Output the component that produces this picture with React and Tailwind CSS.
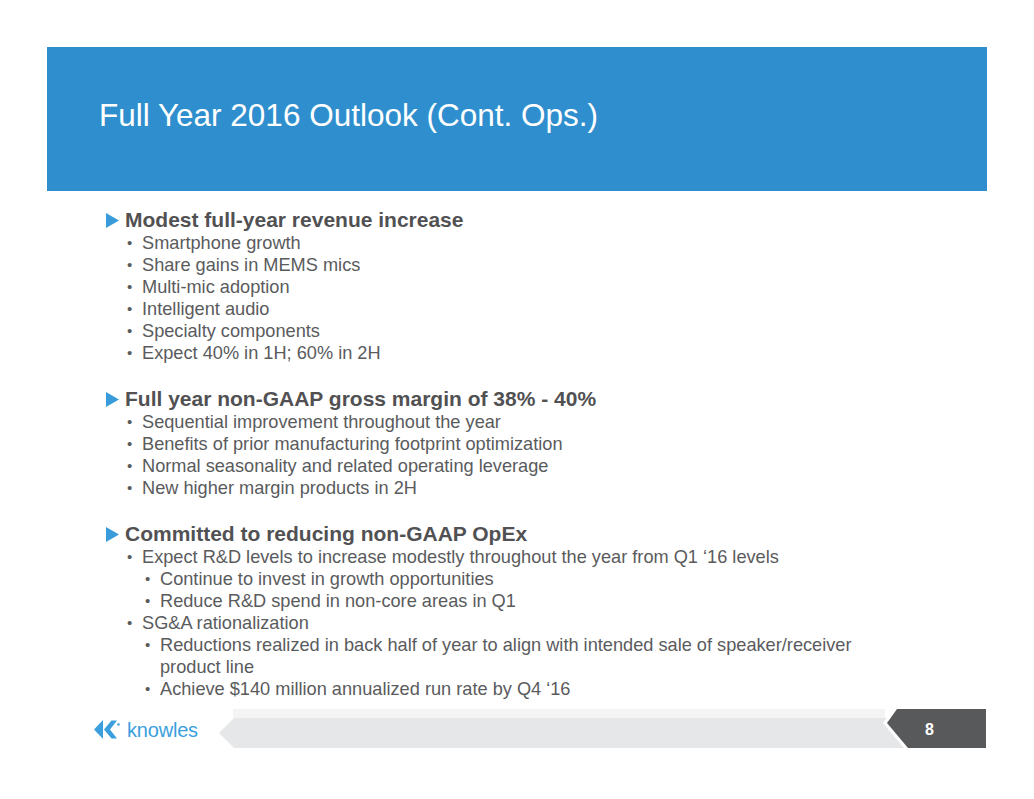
import React from "react";

const Item = ({ children, level = 1 }) => (
  <div className={`flex items-start leading-[22px] text-[18.2px] ${level === 1 ? "pl-[2px]" : "pl-[20px]"}`}>
    <span className="w-[15px] shrink-0 text-[15px] leading-[22px]">•</span>
    <span>{children}</span>
  </div>
);

const Heading = ({ children, className = "" }) => (
  <div className={`flex items-center h-[24px] ${className}`}>
    <svg width="14" height="15" viewBox="0 0 14 15" className="ml-[-19px] mr-[5px] shrink-0">
      <polygon points="0,0 13,7.5 0,15" fill="#3a9bdb" />
    </svg>
    <span className="font-bold text-[21px] leading-[24px] text-[#515153]">{children}</span>
  </div>
);

export default function App() {
  return (
    <div className="w-[1034px] h-[799px] bg-white font-['Liberation_Sans',Arial,sans-serif] text-[#5a5b5d] overflow-hidden">
      <div className="pt-[47px] px-[47px]">
        <div className="h-[144px] bg-[#2f8fce] pl-[52px] pt-[50px]">
          <h1 className="text-white text-[31.5px] leading-[36px] font-normal">Full Year 2016 Outlook (Cont. Ops.)</h1>
        </div>
      </div>

      <div className="pl-[125px] pt-[17px]">
        <Heading>Modest full-year revenue increase</Heading>
        <Item>Smartphone growth</Item>
        <Item>Share gains in MEMS mics</Item>
        <Item>Multi-mic adoption</Item>
        <Item>Intelligent audio</Item>
        <Item>Specialty components</Item>
        <Item>Expect 40% in 1H; 60% in 2H</Item>

        <Heading className="mt-[23px]">Full year non-GAAP gross margin of 38% - 40%</Heading>
        <Item>Sequential improvement throughout the year</Item>
        <Item>Benefits of prior manufacturing footprint optimization</Item>
        <Item>Normal seasonality and related operating leverage</Item>
        <Item>New higher margin products in 2H</Item>

        <Heading className="mt-[23px]">Committed to reducing non-GAAP OpEx</Heading>
        <Item>Expect R&amp;D levels to increase modestly throughout the year from Q1 ‘16 levels</Item>
        <Item level={2}>Continue to invest in growth opportunities</Item>
        <Item level={2}>Reduce R&amp;D spend in non-core areas in Q1</Item>
        <Item>SG&amp;A rationalization</Item>
        <Item level={2}>
          <span className="block w-[715px]">Reductions realized in back half of year to align with intended sale of speaker/receiver product line</span>
        </Item>
        <Item level={2}>Achieve $140 million annualized run rate by Q4 ‘16</Item>
      </div>

      <div className="mt-[9px] flex items-start pl-[94px] pr-[48px]">
        <div className="w-[125px] h-[39px] flex items-center pt-[2px]">
          <svg width="26" height="20" viewBox="0 0 26 20" className="shrink-0">
            <polygon points="0,9.5 9,0 9,19" fill="#3a9fdc" />
            <polygon points="10,9.5 17.5,0.5 23,0.5 16,9.5 23,18.5 17.5,18.5" fill="#3a9fdc" />
            <circle cx="24.5" cy="4.5" r="1.2" fill="#3a9fdc" />
          </svg>
          <span className="ml-[7px] text-[20px] leading-[20px] text-[#3a9fdc] tracking-[-0.2px]">knowles</span>
        </div>
        <div className="relative flex-1 h-[39px]">
          <div className="absolute left-[14px] top-0 h-[9px] w-[652px] bg-[#f4f4f4]" />
          <div className="absolute left-0 top-[9px] h-[30px] w-[690px] bg-[#e6e7e8] [clip-path:polygon(15px_0,100%_0,100%_100%,15px_100%,0_50%)]" />
          <div className="absolute right-0 top-0 h-[39px] w-[103px] bg-white [clip-path:polygon(10px_0,100%_0,100%_100%,21px_100%,0_14px)]" />
          <div className="absolute right-0 top-0 h-[39px] w-[99px] bg-[#58595b] [clip-path:polygon(10px_0,100%_0,100%_100%,21px_100%,0_14px)] flex items-center pl-[38px] pt-[2px]">
            <span className="text-white font-bold text-[16px] leading-[16px]">8</span>
          </div>
        </div>
      </div>
    </div>
  );
}
